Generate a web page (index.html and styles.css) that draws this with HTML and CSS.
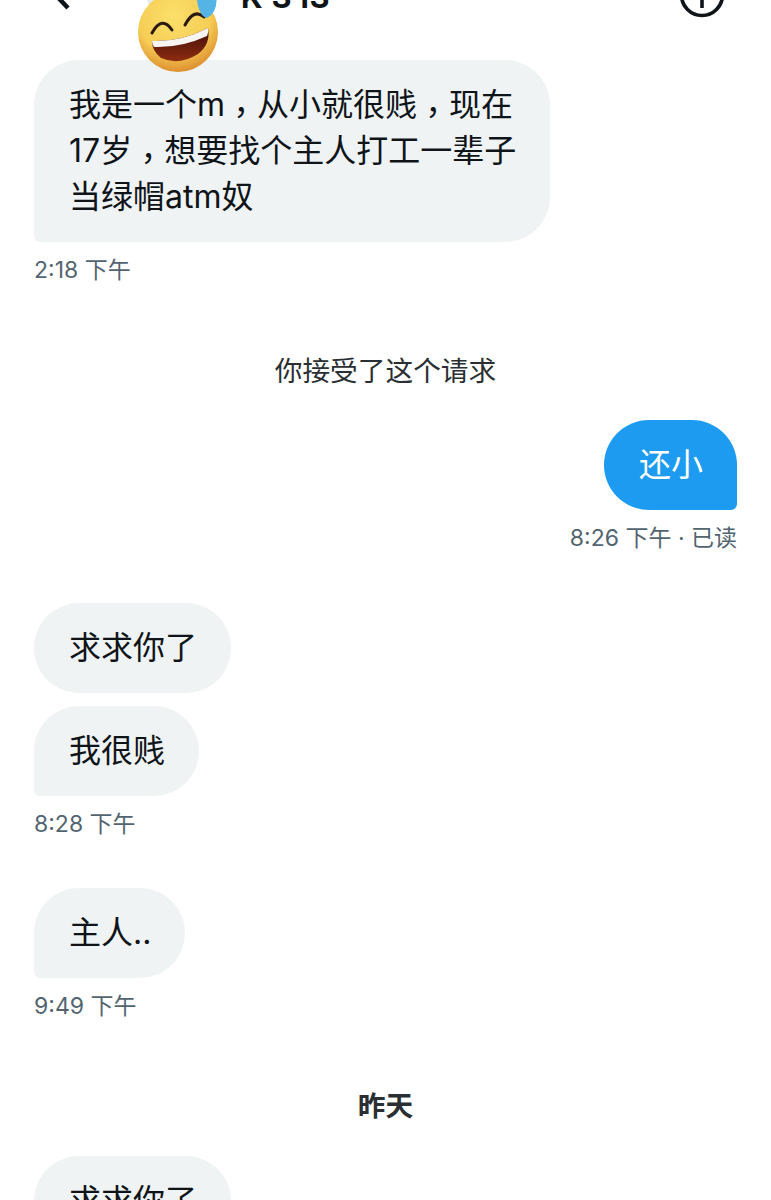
FILE: index.html
```html
<!DOCTYPE html>
<html lang="zh-CN">
<head>
  <meta charset="UTF-8">
  <meta name="viewport" content="width=device-width, initial-scale=1.0">
  <title>K S IS</title>
  <link rel="stylesheet" href="styles.css">
</head>
<body>
  <div class="app-container">
    <header class="top-bar">
      <svg class="back-icon" width="40" height="60" viewBox="0 0 40 60">
        <path d="M27 8 L6 30 L27 52" fill="none" stroke="#0f1419" stroke-width="4.5"/>
      </svg>
      <h1 class="top-title">K S IS</h1>
      <svg class="info-icon" width="48" height="48" viewBox="0 0 48 48">
        <circle cx="24" cy="24" r="20.5" fill="none" stroke="#0f1419" stroke-width="3.6"/>
        <path d="M24 20 V37" fill="none" stroke="#0f1419" stroke-width="3.6"/>
      </svg>
    </header>

    <svg class="emoji" width="96" height="88" viewBox="0 0 96 88">
      <defs>
        <radialGradient id="face" cx="45%" cy="30%" r="70%">
          <stop offset="0" stop-color="#fbe06a"/>
          <stop offset="0.65" stop-color="#f6cd55"/>
          <stop offset="1" stop-color="#dd9030"/>
        </radialGradient>
        <linearGradient id="mouth" x1="0" y1="0" x2="0" y2="1">
          <stop offset="0" stop-color="#3d0f08"/>
          <stop offset="1" stop-color="#8e2c10"/>
        </linearGradient>
      </defs>
      <path d="M16 8 L26 8 L30 20 L20 20 Z" fill="#e8eaec"/>
      <circle cx="47" cy="40" r="40" fill="url(#face)"/>
      <path d="M21 41 Q31 23 41 38" fill="none" stroke="#2b1a10" stroke-width="3" stroke-linecap="round"/>
      <path d="M54 33 Q63 16 73 25" fill="none" stroke="#2b1a10" stroke-width="3" stroke-linecap="round"/>
      <path d="M21 49 Q50 50 77 36 Q80 52 67 62 Q48 74 30 66 Q21 59 21 49 Z" fill="url(#mouth)"/>
      <path d="M21 49 Q50 50 77 36 Q78 40 76 44 Q50 56 23 55 Q21 52 21 49 Z" fill="#f7f5f2"/>
      <path d="M66 0 L85 0 Q88 20 76 26 Q68 24 66 8 Z" fill="#54b4e6"/>
    </svg>

    <main class="thread">
      <div class="bubble bubble-in">我是一个m<span class="comma" lang="zh-TW">，</span>从小就很贱<span class="comma" lang="zh-TW">，</span>现在<br>17岁<span class="comma" lang="zh-TW">，</span>想要找个主人打工一辈子<br>当绿帽atm奴</div>
      <div class="time">2:18 下午</div>

      <div class="notice notice-first">你接受了这个请求</div>

      <div class="bubble bubble-out">还小</div>
      <div class="time time-out">8:26 下午 · 已读</div>

      <div class="bubble bubble-round group-start">求求你了</div>
      <div class="bubble bubble-in group-next">我很贱</div>
      <div class="time">8:28 下午</div>

      <div class="bubble bubble-in group-start group-tight">主人..</div>
      <div class="time">9:49 下午</div>

      <div class="notice notice-day">昨天</div>

      <div class="bubble bubble-round notice-after">求求你了</div>
    </main>
  </div>
</body>
</html>
```

FILE: styles.css
```css
* {
  margin: 0;
  padding: 0;
  box-sizing: border-box;
}
html, body {
  height: 1200px;
  overflow: hidden;
  background: #fff;
}
body {
  font-family: Inter, "Noto Sans CJK SC", sans-serif;
  color: #0f1419;
}
.app-container {
  position: relative;
  height: 1200px;
  overflow: hidden;
}
.top-bar {
  display: flex;
  align-items: center;
  height: 60px;
  position: relative;
}
.back-icon {
  position: absolute;
  left: 41px;
  top: -44px;
}
.top-title {
  position: absolute;
  left: 241px;
  top: -21px;
  font-size: 30px;
  line-height: 36px;
  font-weight: 700;
  letter-spacing: 1px;
  white-space: nowrap;
}
.info-icon {
  position: absolute;
  left: 678px;
  top: -29px;
}
.emoji {
  position: absolute;
  left: 131px;
  top: -8px;
  z-index: 2;
}
.thread {
  display: flex;
  flex-direction: column;
  align-items: flex-start;
  padding: 0 34px;
}
.bubble {
  padding: 22px 34px 22px 35px;
  min-height: 90px;
  font-size: 32px;
  line-height: 46px;
  background: #eff3f4;
  border-radius: 45px;
  white-space: nowrap;
}
.comma {
  font-family: "Noto Sans CJK TC", sans-serif;
  line-height: 0;
  vertical-align: -8px;
}
.bubble-in {
  border-bottom-left-radius: 6px;
}
.bubble-out {
  align-self: flex-end;
  margin-top: 29px;
  background: #1d9bf0;
  color: #fff;
  border-bottom-right-radius: 6px;
}
.group-start {
  margin-top: 51px;
}
.group-tight {
  margin-top: 50px;
}
.group-next {
  margin-top: 13px;
}
.time {
  margin-top: 14px;
  font-size: 23px;
  line-height: 28px;
  color: #536471;
}
.time-out {
  align-self: flex-end;
}
.notice {
  align-self: center;
  font-size: 27.7px;
  line-height: 40px;
  color: #2a2f33;
}
.notice-first {
  margin-top: 67px;
}
.notice-day {
  margin-top: 66px;
  font-weight: 700;
}
.notice-after {
  margin-top: 30px;
}
```
